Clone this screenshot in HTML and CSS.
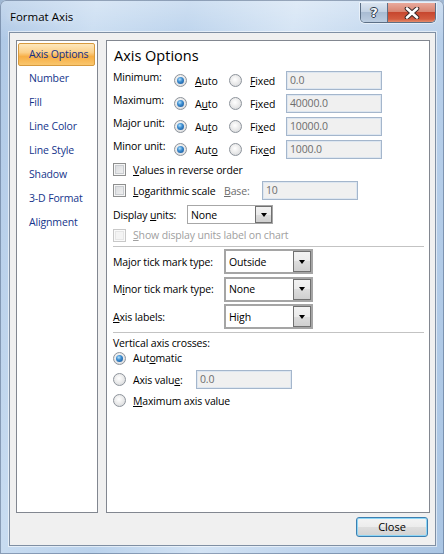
FILE: index.html
```html
<!DOCTYPE html>
<html>
<head>
<meta charset="utf-8">
<link rel="stylesheet" href="styles.css">
</head>
<body>
<div class="window">
  <div class="titlebar">
    <div class="title">Format Axis</div>
    <div class="caption-buttons">
      <div class="cap cap-help">?</div>
      <div class="cap cap-close">
        <svg width="16" height="12" viewBox="0 0 16 12"><path d="M3 1.5 L13 10.5 M13 1.5 L3 10.5" stroke="#3a2a2a" stroke-width="4.6" stroke-linecap="round"/><path d="M3 1.5 L13 10.5 M13 1.5 L3 10.5" stroke="#ffffff" stroke-width="2.6" stroke-linecap="round"/></svg>
      </div>
    </div>
  </div>
  <div class="client">
    <div class="panes">
      <ul class="nav">
        <li class="nav-item active">Axis Options</li>
        <li class="nav-item">Number</li>
        <li class="nav-item">Fill</li>
        <li class="nav-item">Line Color</li>
        <li class="nav-item">Line Style</li>
        <li class="nav-item">Shadow</li>
        <li class="nav-item">3-D Format</li>
        <li class="nav-item">Alignment</li>
      </ul>
      <div class="main">
        <div class="heading">Axis Options</div>
        <div class="opt-grid">
          <div class="opt-label">Minimum:</div>
          <div class="radio-group"><span class="radio checked"></span><span><u>A</u>uto</span></div>
          <div class="radio-group"><span class="radio"></span><span><u>F</u>ixed</span></div>
          <div class="textbox">0.0</div>

          <div class="opt-label">Maximum:</div>
          <div class="radio-group"><span class="radio checked"></span><span>A<u>u</u>to</span></div>
          <div class="radio-group"><span class="radio"></span><span>F<u>i</u>xed</span></div>
          <div class="textbox">40000.0</div>

          <div class="opt-label">Major unit:</div>
          <div class="radio-group"><span class="radio checked"></span><span>Au<u>t</u>o</span></div>
          <div class="radio-group"><span class="radio"></span><span>Fi<u>x</u>ed</span></div>
          <div class="textbox">10000.0</div>

          <div class="opt-label">Minor unit:</div>
          <div class="radio-group"><span class="radio checked"></span><span>Aut<u>o</u></span></div>
          <div class="radio-group"><span class="radio"></span><span>Fix<u>e</u>d</span></div>
          <div class="textbox">1000.0</div>
        </div>

        <div class="row row-check1">
          <span class="checkbox"></span><span><u>V</u>alues in reverse order</span>
        </div>
        <div class="row row-check2">
          <div class="log-block"><span class="checkbox"></span><span><u>L</u>ogarithmic scale</span></div>
          <div class="base-label"><u>B</u>ase:</div>
          <div class="textbox">10</div>
        </div>
        <div class="row row-units">
          <div class="units-label">Display <u>u</u>nits:</div>
          <div class="select select-small"><span class="select-value">None</span><span class="drop"><span class="tri"></span></span></div>
        </div>
        <div class="row row-show disabled">
          <span class="checkbox"></span><span><u>S</u>how display units label on chart</span>
        </div>
        <div class="sep"></div>
        <div class="tick-rows">
          <div class="row tick-row">
            <div class="tick-label">Major tick mark type:</div>
            <div class="select select-big"><span class="select-value">Outside</span><span class="drop"><span class="tri"></span></span></div>
          </div>
          <div class="row tick-row">
            <div class="tick-label">M<u>i</u>nor tick mark type:</div>
            <div class="select select-big"><span class="select-value">None</span><span class="drop"><span class="tri"></span></span></div>
          </div>
          <div class="row tick-row">
            <div class="tick-label"><u>A</u>xis labels:</div>
            <div class="select select-big"><span class="select-value">High</span><span class="drop"><span class="tri"></span></span></div>
          </div>
        </div>
        <div class="sep sep2"></div>
        <div class="row row-cross-title">Vertical axis crosses:</div>
        <div class="row row-auto">
          <span class="radio checked"></span><span>Aut<u>o</u>matic</span>
        </div>
        <div class="row row-axisval">
          <div class="axisval-block"><span class="radio"></span><span>Axis valu<u>e</u>:</span></div>
          <div class="textbox">0.0</div>
        </div>
        <div class="row row-max">
          <span class="radio"></span><span><u>M</u>aximum axis value</span>
        </div>
      </div>
    </div>
    <div class="footer">
      <button class="btn">Close</button>
    </div>
  </div>
</div>
</body>
</html>
```
FILE: styles.css
```css
* { box-sizing: border-box; }
html, body { margin: 0; padding: 0; }
body {
  width: 444px;
  height: 554px;
  overflow: hidden;
  background: #9fb7d3;
  font-family: "Open Sans", "Noto Sans", sans-serif;
  font-size: 10.5px;
  letter-spacing: -0.15px;
  color: #000;
}
u { text-decoration: underline; text-underline-offset: 1px; }

.window {
  width: 444px;
  height: 554px;
  display: flex;
  flex-direction: column;
  border-radius: 6px 6px 0 0;
  background:
    linear-gradient(to bottom, rgba(255,255,255,0.3), rgba(255,255,255,0) 40px),
    linear-gradient(100deg, #adc7e5 0%, #c8dcf1 18%, #bad2ec 35%, #d3e3f4 55%, #bed4ed 75%, #aac5e3 100%);
  box-shadow: inset 0 0 0 1px rgba(60,80,110,0.45);
}

.titlebar {
  height: 32px;
  flex: none;
  display: flex;
  justify-content: space-between;
  align-items: flex-start;
  padding: 3px 8px 0 10px;
}
.title {
  margin-top: 5px;
  font-size: 11.5px;
  letter-spacing: 0;
  line-height: 18px;
  color: #000;
  text-shadow: 0 0 6px rgba(255,255,255,0.9);
}
.caption-buttons {
  display: flex;
  height: 20px;
  border: 1px solid #5c6f86;
  border-top: none;
  border-radius: 0 0 5px 5px;
  overflow: hidden;
  box-shadow: 0 0 0 1px rgba(255,255,255,0.5);
}
.cap {
  height: 19px;
  display: flex;
  align-items: center;
  justify-content: center;
}
.cap-help {
  width: 27px;
  border-right: 1px solid #5c6f86;
  background: linear-gradient(to bottom, #dbe5f1 0%, #c3d2e4 45%, #a9bcd3 50%, #bccde1 100%);
  font-family: "DejaVu Sans", sans-serif;
  font-weight: bold;
  font-size: 13px;
  color: #f4f7fb;
  text-shadow: -1px 0 #2c3a4c, 1px 0 #2c3a4c, 0 -1px #2c3a4c, 0 1px #2c3a4c;
}
.cap-close {
  width: 47px;
  background: linear-gradient(to bottom, #e9a99c 0%, #d88572 45%, #c7472f 50%, #d35c40 85%, #e48d6d 100%);
}

.client {
  flex: 1;
  margin: 0 8px 8px 9px;
  border: 1px solid #7f8fa3;
  background: #f0f0f0;
  padding: 7px 5px 0 6px;
  display: flex;
  flex-direction: column;
  box-shadow: 0 0 0 1px rgba(255,255,255,0.55);
}
.panes {
  height: 473px;
  display: flex;
  gap: 8px;
}
.nav {
  list-style: none;
  margin: 0;
  padding: 2px 2px 0 1px;
  width: 82px;
  background: #fff;
  border: 1px solid #828790;
}
.nav-item {
  height: 23px;
  margin-bottom: 1px;
  padding-left: 10px;
  border: 1px solid transparent;
  line-height: 21px;
  font-size: 10.5px;
  color: #15358b;
  white-space: nowrap;
  border-radius: 2px;
}
.nav-item.active {
  border-color: #d79a3e;
  background: linear-gradient(to bottom, #fde7bd 0%, #fbd08a 40%, #f7ae45 60%, #f9c66d 100%);
  color: #142f86;
}

.main {
  width: 324px;
  background: #fff;
  border: 1px solid #828790;
  padding: 3px 6px 0 6px;
  display: flex;
  flex-direction: column;
}
.heading {
  font-size: 14.5px;
  letter-spacing: 0;
  line-height: 24px;
  height: 27px;
  padding-left: 1px;
}

.opt-grid {
  display: grid;
  grid-template-columns: 61px 55px 57px 96px;
  grid-auto-rows: 19px;
  row-gap: 4px;
  align-items: center;
}
.opt-label {
  align-self: start;
  line-height: 13px;
}
.radio-group {
  display: flex;
  align-items: center;
  gap: 8px;
}
.radio {
  flex: none;
  width: 13px;
  height: 13px;
  border-radius: 50%;
  border: 1px solid #8d939b;
  background: radial-gradient(circle at 45% 40%, #ffffff 0%, #ececec 45%, #cfd2d6 100%);
  position: relative;
}
.radio.checked::after {
  content: "";
  position: absolute;
  left: 2px;
  top: 2px;
  width: 7px;
  height: 7px;
  border-radius: 50%;
  background: radial-gradient(circle at 40% 35%, #b6e2fb 0%, #3d8dd0 40%, #0f4b8f 100%);
}
.textbox {
  height: 19px;
  width: 96px;
  border: 1px solid #a4b6cc;
  box-shadow: inset 0 0 0 1px #dde6f0;
  background: #f0f0f0;
  color: #6d6d6d;
  padding-left: 3px;
  line-height: 17px;
}

.row {
  display: flex;
  align-items: center;
}
.checkbox {
  flex: none;
  width: 13px;
  height: 13px;
  border: 1px solid #8e8f8f;
  background: linear-gradient(135deg, #d6d8db 0%, #f4f4f4 100%);
  box-shadow: inset 0 0 0 1px #f6f6f6, inset 0 0 0 2px #c9ccd0;
  margin-right: 7px;
}
.row-check1 { height: 21px; }
.row-check2 { height: 19px; margin-top: 1px; }
.log-block { width: 111px; display: flex; align-items: center; }
.base-label { width: 38px; color: #6d6d6d; }
.row-units { height: 19px; margin-top: 5px; }
.units-label { width: 74px; }
.row-show { height: 22px; }
.disabled { color: #a0a0a0; }
.disabled .checkbox {
  border-color: #c8c8c8;
  background: #f4f4f4;
  box-shadow: inset 0 0 0 1px #fafafa, inset 0 0 0 2px #e6e6e6;
}

.select {
  display: flex;
  align-items: stretch;
  background: #fff;
  border: 1px solid #a7a7a7;
}
.select-small { width: 86px; height: 19px; }
.select-big { width: 89px; height: 25px; border: 2px solid #a5a5a5; }
.select-value {
  flex: 1;
  padding-left: 3px;
  display: flex;
  align-items: center;
}
.drop {
  width: 17px;
  flex: none;
  border: 1px solid #707070;
  background: linear-gradient(to bottom, #f2f2f2 0%, #ebebeb 50%, #dddddd 50%, #cfcfcf 100%);
  display: flex;
  align-items: center;
  justify-content: center;
}
.select-big .drop { width: 18px; }
.tri {
  width: 0;
  height: 0;
  border-left: 3.5px solid transparent;
  border-right: 3.5px solid transparent;
  border-top: 4px solid #000;
}

.sep {
  height: 1px;
  background: #c3c3c3;
  margin-right: -1px;
}
.tick-rows {
  display: flex;
  flex-direction: column;
  gap: 2.5px;
  margin-top: 2px;
}
.tick-row { height: 25px; }
.tick-label { width: 111px; }
.sep2 { margin-top: 3px; }
.row-cross-title { height: 19px; }
.row-auto { height: 12px; }
.row-auto .radio, .row-axisval .radio, .row-max .radio { margin-right: 7px; }
.row-axisval { height: 19px; margin-top: 6px; }
.axisval-block { width: 83px; display: flex; align-items: center; }
.row-max { height: 23px; }

.footer {
  display: flex;
  justify-content: flex-end;
  padding-top: 4px;
  padding-right: 2px;
}
.btn {
  width: 72px;
  height: 20px;
  font-family: inherit;
  font-size: 11px;
  letter-spacing: 0;
  color: #000;
  border: 1px solid #3c7fb1;
  border-radius: 3px;
  background: linear-gradient(to bottom, #f4f4f4 0%, #ececec 50%, #dedede 50%, #d2d2d2 100%);
  box-shadow: inset 0 0 0 1px #8fd6f5;
  padding: 0;
  line-height: 16px;
}
```
